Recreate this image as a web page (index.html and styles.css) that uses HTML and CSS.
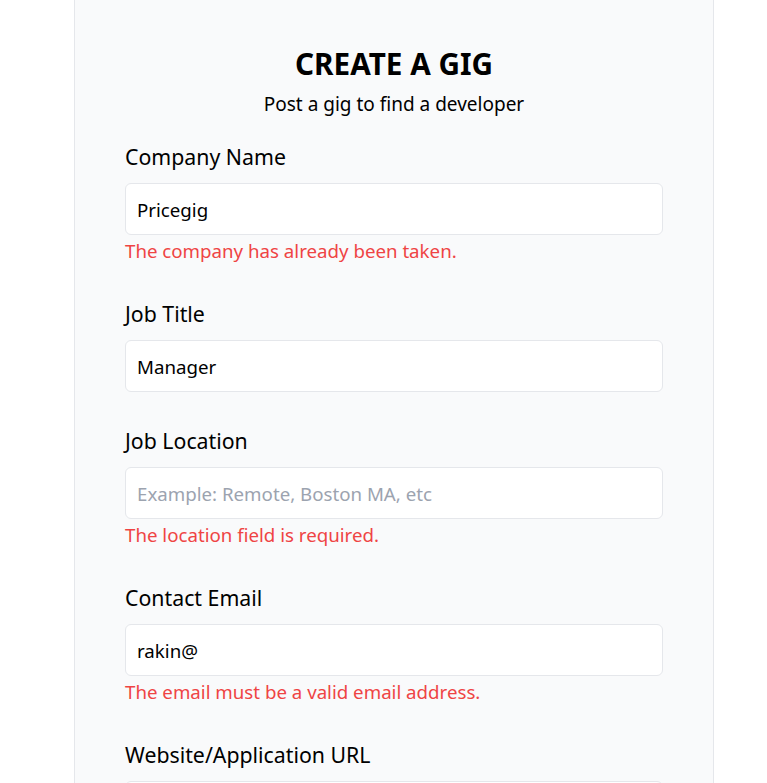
FILE: index.html
```html
<!DOCTYPE html>
<html lang="en">
<head>
<meta charset="utf-8">
<title>Create a Gig</title>
<link rel="stylesheet" href="styles.css">
</head>
<body>
<main class="card">
  <header class="head">
    <h1 class="title">CREATE A GIG</h1>
    <p class="subtitle">Post a gig to find a developer</p>
  </header>
  <form class="form">
    <div class="field">
      <label class="label" for="company">Company Name</label>
      <input class="input" id="company" type="text" value="Pricegig">
      <p class="error">The company has already been taken.</p>
    </div>
    <div class="field">
      <label class="label" for="title">Job Title</label>
      <input class="input" id="title" type="text" value="Manager">
    </div>
    <div class="field">
      <label class="label" for="location">Job Location</label>
      <input class="input" id="location" type="text" placeholder="Example: Remote, Boston MA, etc">
      <p class="error">The location field is required.</p>
    </div>
    <div class="field">
      <label class="label" for="email">Contact Email</label>
      <input class="input" id="email" type="text" value="rakin@">
      <p class="error">The email must be a valid email address.</p>
    </div>
    <div class="field">
      <label class="label" for="url">Website/Application URL</label>
      <input class="input" id="url" type="text">
    </div>
  </form>
</main>
</body>
</html>
```
FILE: styles.css
```css
* { box-sizing: border-box; }
html, body { margin: 0; padding: 0; background: #fff; }
body {
  font-family: "Noto Sans", "Open Sans", sans-serif;
  color: #000;
  overflow: hidden;
  height: 783px;
}
.card {
  width: 640px;
  margin-left: 74px;
  background: #f9fafb;
  border-left: 1px solid #e5e7eb;
  border-right: 1px solid #e5e7eb;
  padding: 46px 50px 0 50px;
  min-height: 783px;
}
.head { text-align: center; }
.title {
  margin: 0;
  font-size: 29.7px;
  line-height: 36px;
  font-weight: 700;
}
.subtitle {
  margin: 8px 0 0;
  font-size: 19px;
  line-height: 28px;
}
.form { margin-top: 25px; display: flex; flex-direction: column; gap: 35px; }
.field { display: flex; flex-direction: column; }
.label {
  font-size: 21.3px;
  line-height: 28px;
  margin-bottom: 12px;
}
.input {
  height: 52px;
  border: 1px solid #e5e7eb;
  border-radius: 6px;
  background: #fff;
  padding: 0 11px;
  font-family: inherit;
  font-size: 18.7px;
  color: #000;
  outline: none;
}
.input::placeholder { color: #9ca3af; }
.error {
  margin: 2px 0 0;
  font-size: 18.7px;
  line-height: 28px;
  color: #ef4444;
}
```
